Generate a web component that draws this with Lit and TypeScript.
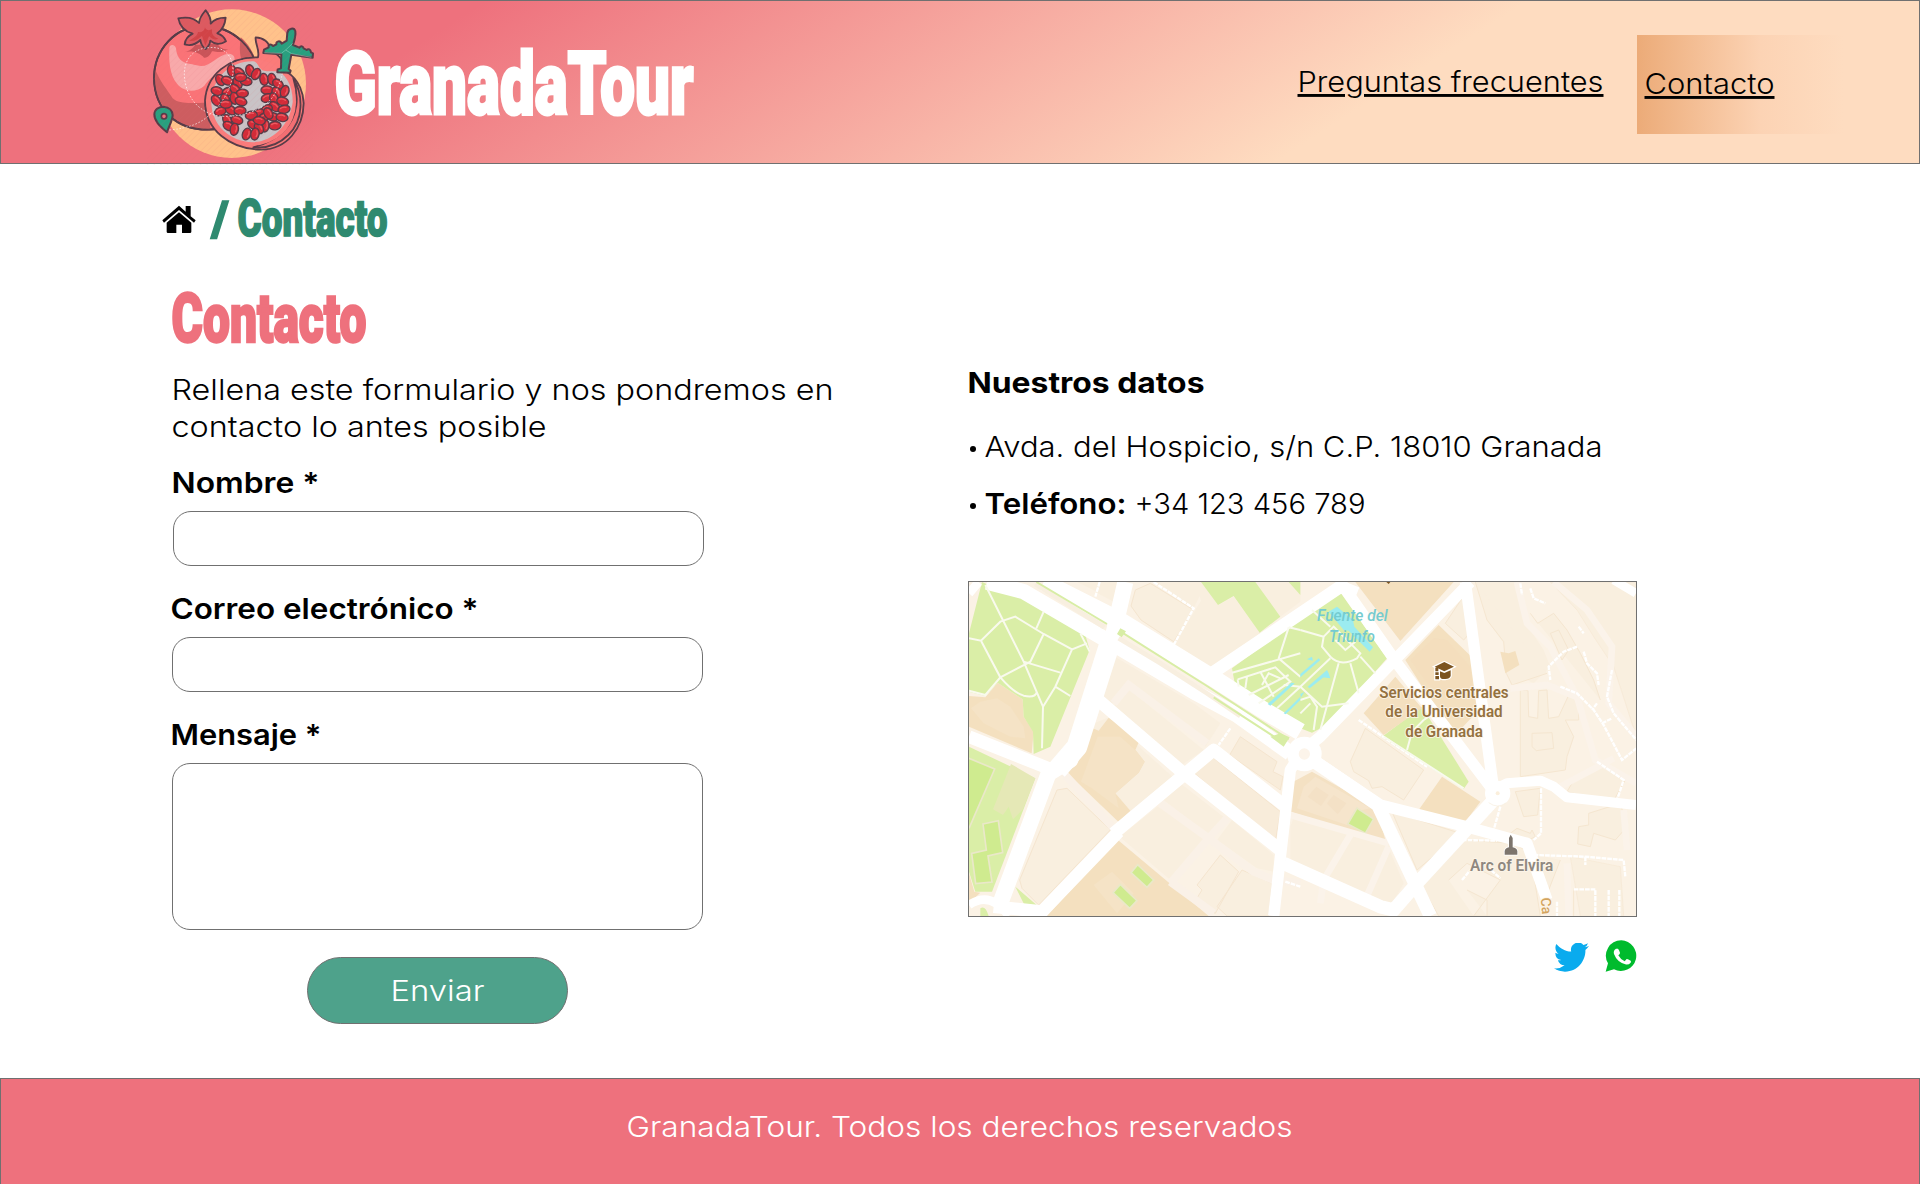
import { LitElement, html, svg, css } from "lit";
import { customElement } from "lit/decorators.js";

/** One line of text set to an exact measure: w = line width, b = baseline in a box of height h. */
const line = (
  content: string,
  w: number,
  size: number,
  cls: string,
  h = 36,
  b = 27
) => html`<svg class="line" width=${w} height=${h}>
  <text class=${cls} x="-1.5" y=${b} font-size=${size} textLength=${w + 2} lengthAdjust="spacingAndGlyphs">${content}</text>
</svg>`;

const seeds: [number, number, number][] = [
  [275, 212, 80], [298, 218, 40], [330, 212, 75], [348, 222, 120], [241, 240, 60], [262, 242, 20],
  [293, 248, 65], [318, 244, 10], [302, 232, 0], [231, 273, 15], [264, 275, -20], [285, 268, 45], [307, 280, 0],
  [229, 302, 50], [256, 298, 60], [283, 295, 80], [303, 304, 20], [241, 334, -20], [272, 330, 35], [300, 332, 0],
  [258, 312, 0], [262, 360, 60], [291, 360, 20], [266, 378, 30], [283, 388, 100], [372, 238, 80], [396, 238, 80],
  [414, 252, 40], [381, 270, 0], [410, 278, 60], [434, 274, 110], [381, 294, -20], [402, 296, 70], [428, 304, 15],
  [404, 320, 40], [432, 328, -10], [380, 328, -30], [356, 340, -20], [334, 346, -10], [370, 354, -40],
  [398, 350, 10], [426, 352, 10], [340, 374, 30], [375, 378, 100], [405, 377, -5], [357, 384, 60],
  [320, 402, 110], [345, 402, 100], [358, 362, 10], [385, 340, 60],
];

const logo = html`<svg class="logo" width="190" height="164" viewBox="0 3 570 492">
  <defs>
    <pattern id="hatch" width="14" height="14" patternUnits="userSpaceOnUse" patternTransform="rotate(45)">
      <path d="M0 0V14" stroke="#d9606c" stroke-width="3" opacity=".16" />
    </pattern>
  </defs>
  <circle cx="275" cy="251" r="223" fill="#ffc28b" />
  <g stroke="#573c48" stroke-width="5.5" stroke-linejoin="round" stroke-linecap="round">
    <path d="M195 78C105 76 42 150 42 235C44 330 110 390 205 389C300 385 352 315 354 230C350 145 280 80 195 78Z" fill="#fa7377" />
    <path d="M44 205C60 245 82 270 98 295C118 315 165 308 200 308L212 389C120 390 55 335 44 250Z" fill="#cd5d60" stroke="none" />
    <path d="M302 112C345 148 358 205 352 240L310 190C296 165 299 140 302 112Z" fill="#cd5d60" stroke="none" />
    <path d="M132 157C150 152 160 145 165 135L232 130C237 142 250 150 264 148C240 165 222 150 215 155C210 168 200 173 192 173C180 158 155 150 132 157Z" fill="#c95459" stroke="none" />
    <path d="M88 145C88 133 104 131 108 145C112 195 150 190 170 196C210 208 225 165 267 161C295 164 285 195 260 205C230 218 208 235 193 257C170 278 130 278 110 250C90 225 86 185 88 145Z" fill="#f8a9aa" stroke="none" />
    <path d="M195 78C105 76 42 150 42 235C44 330 110 390 205 389C300 385 352 315 354 230C350 145 280 80 195 78Z" fill="none" />
    <path d="M177 69C179 50 188 42 197 31C207 43 214 53 212 71C224 56 238 53 257 53C255 76 247 90 232 100C245 104 254 113 258 124C240 136 222 132 211 122C210 132 205 140 197 147C187 140 182 131 181 120C166 135 150 138 134 133C136 116 144 108 158 101C134 94 119 78 115 55C140 50 164 55 177 69Z" fill="#dc5a60" />
    <path d="M195 82C199 94 210 91 216 88C214 105 223 112 235 116C220 123 212 112 207 109L196 137L186 108C178 112 171 125 147 123C158 115 173 108 174 96C187 98 193 92 195 82Z" fill="#d14347" stroke="none" />
    <path d="M354 172C360 148 344 130 347 112C370 113 389 127 388 145C408 160 436 180 440 215C480 240 491 285 491 310C490 385 440 448 365 449C270 448 195 390 195 302C200 225 265 170 354 172Z" fill="#fb7b79" />
    <path d="M460 235C490 285 492 360 445 405C420 430 385 446 340 442C415 420 460 380 469 315C473 280 468 260 460 235Z" fill="#f46e72" />
    <ellipse cx="336" cy="307" rx="132" ry="130" fill="#fa7c7c" stroke="none" />
    <path d="M336 184C355 184 350 198 367 211C388 219 404 207 424 220C450 240 459 278 458 307C450 375 397 426 339 427C268 425 215 375 214 307C215 235 270 185 336 184Z" fill="#c9c3c6" stroke="none" />
  </g>
  <g fill="#d32b38" stroke="#573c48" stroke-width="4">
    ${seeds.map(
      ([x, y, r]) => svg`<g transform="translate(${x} ${y}) rotate(${r})">
        <ellipse rx="18" ry="12.5" />
        <path d="M-10 -4Q-2 -9 7 -5" fill="none" stroke="#ee5a60" stroke-width="4" stroke-linecap="round" />
      </g>`
    )}
  </g>
  <path d="M88 390C145 385 184 370 211 342C244 314 278 265 279 210C278 160 245 139 207 143C158 145 132 180 133 225C136 290 177 342 245 349C320 351 380 325 405 280C416 258 424 238 427 220" fill="none" stroke="#fff" stroke-width="2.5" stroke-dasharray="5 5" opacity=".8" />
  <g fill="#27a07f" stroke="#573c48" stroke-width="6" stroke-linejoin="round">
    <path d="M81 397C58 377 43 363 43 343C44 327 57 320 71 320C87 321 98 332 98 346C97 362 87 378 81 397Z" />
    <circle cx="72" cy="349" r="8" fill="#ee717d" stroke-width="5" />
    <path d="M440 122L442 98C445 86 462 80 466 94C468 108 463 121 459 135L478 143C481 138 488 136 491 145L500 150C505 145 512 148 513 157L519 160L518 173L454 164L446 207L452 212L450 218L412 217L413 208L423 205L424 163L370 159L372 149L386 142C384 134 392 130 399 138L409 133C407 123 421 120 425 131Z" />
    <path d="M373 158L424 160L437 150L455 161L514 172M437 150L458 130" fill="none" stroke="#9dd6c4" stroke-width="1.5" />
  </g>
  <rect x="20" y="3" width="500" height="492" fill="url(#hatch)" />
</svg>`;

const mapArt = html`<svg class="art" width="667" height="334" viewBox="26 36 2001 1002" preserveAspectRatio="none">
  <rect x="26" y="36" width="2001" height="1002" fill="#fbf2e5" />
  <g fill="#f9efdf" stroke="#f5e5cf" stroke-width="3">
    <path d="M350 36L410 65L418 36M420 36L412 70L460 95L475 36ZM520 36H580L700 115L718 78L722 92L640 225L745 295L900 190L820 80L775 105L722 36H880L960 140L1020 95V36" stroke="none" />
    <path d="M525 60L512 108L542 150L640 215L700 120L570 40Z" />
    <path d="M466 262L420 370L455 400L505 335L735 530L780 460L700 400Z" stroke="none" />
    <path d="M505 358L463 408L668 582L730 540Z" stroke="none" />
    <path d="M440 444L382 468L312 600L475 756L510 722L636 620Z" stroke="none" />
    <path d="M290 660L178 930L185 955L235 1005L450 780L320 655Z" />
    <path d="M620 745L528 835L628 915L708 820Z" />
    <path d="M598 705L478 800L630 930L740 815ZM660 640L610 690L745 795L795 745ZM815 750L770 810L890 895L940 905V855Z" stroke="none" />
    <path d="M757 562L700 608L945 815L960 725ZM840 500L808 555L960 660L968 620L938 605L950 575Z" fill="#f8ecda" />
    <path d="M780 855L710 945L725 960L700 1000L765 1030L835 905ZM845 900L770 1010L800 1038H925L935 940Z" />
    <path d="M990 770V870L1040 890L1290 1010L1330 940L1240 730L1020 690Z" stroke="none" />
  </g>
  <g fill="#f4e0bf">
    <path d="M382 468L415 482L445 443L540 506L525 540L553 575L535 608L465 670L510 722L475 756L312 600L342 558Z" />
    <path d="M26 378L75 382L112 338L187 388L190 440L220 485L214 550L26 470Z" />
    <path d="M470 808L260 1038H745Z" />
    <path d="M26 910L42 965L60 968L26 1000ZM1005 650L1020 640V730L990 722Z" />
  </g>
  <path d="M412 500L362 635L395 655L475 715L465 670L535 608L553 575L530 545L480 500Z M60 395L110 385L150 410L190 470L195 505L150 500L110 480L70 460L32 415Z M455 905L520 970L470 1030L400 945Z" fill="#f5e3c6" />
  <g fill="#daeea7">
    <path d="M65 36L140 70L190 85L375 195L388 240L270 530L220 552L218 485L190 440L187 388L112 338L75 378L26 365V190Z" />
    <path d="M26 530L225 625L95 965H45L26 905Z" />
    <path d="M722 36L773 105L820 78L898 188L960 140L885 36ZM985 36L1020 75V36ZM815 295L1020 145L1135 60L1280 265L1110 460L1055 488L1020 475L825 350Z" />
    <path d="M1265 500L1385 410L1525 635L1510 657Z" />
    <path d="M212 820L172 915L176 890ZM165 950L235 1010L195 1010ZM60 1015Q75 1005 85 1038H60Z" />
  </g>
  <path d="M152 582L225 625L188 718L158 748L145 710L128 735L98 718Z" fill="#e5e8b6" />
  <g fill="#cfeb8f" stroke="#eae8c9" stroke-width="5">
    <path d="M26 565L103 597L26 775" /><path d="M68 762L114 752L127 848L83 858L95 936L46 941L34 850L78 840Z" />
    <path d="M532 884L580 930L560 952L512 908ZM480 943L530 992L508 1015L458 968Z" />
  </g>
  <g fill="none" stroke="#faf1e7" stroke-width="24">
    <path d="M460 400L505 345L740 520M310 610L460 775M600 700L745 805L880 905L940 930L1020 940M630 940L745 805L800 745M630 935L760 1030" />
  </g>
  <g transform="translate(1020 0)">
    <path d="M165 36H460L300 213ZM315 270L415 165L518 265L530 350L535 420L460 500ZM190 430L285 320L365 415L250 495ZM355 720L425 620L540 695L495 755Z" fill="#f4e0bf" />
    <path d="M-30 640L35 605L230 715L255 810L180 790L-30 725Z" fill="#f4e1c3" />
    <path d="M10 650L45 620L210 715L160 725L140 765L-10 715Z" fill="#f6e5cc" />
    <path d="M22 680L48 650L85 675L62 708ZM80 700L100 675L138 700L112 733Z" fill="#f4e1c6" />
    <path d="M330 270L400 205L440 210L510 290L520 380L470 390L430 375L380 340Z" fill="#f3dcbb" opacity=".5" />
    <path d="M170 714L220 747L195 790L142 762Z" fill="#cfeb8f" stroke="#eae8c9" stroke-width="5" />
    <g fill="#f9efdf" stroke="#f5e6d0" stroke-width="3">
      <path d="M485 85L500 120L508 190L490 210L435 160Z" />
      <path d="M195 475L370 600L310 690L245 650L215 655L205 632L160 605L150 575Z" />
      <path d="M525 36L560 150L610 220L640 310L700 340L750 290L730 240L670 150L650 36Z" stroke="none" />
      <path d="M525 36L560 150L610 215L618 310L635 345L740 310M690 130L712 160L760 130L800 180L840 250L880 330L900 390M660 360V620L795 600L800 560L820 500L795 450H835V380L810 365L775 440L745 445L740 360L715 362L712 445L685 440L683 362Z" />
      <path d="M695 490L755 488L760 535L708 542L695 530ZM645 665L720 655L712 735L670 740ZM960 700L980 770L945 810L880 790L870 830L832 822L835 770L865 765L865 730ZM905 580L975 630L935 700L800 665L815 640ZM750 190L775 180L805 240L785 270Z" />
      <path d="M630 790L650 775L690 790L695 780L705 800L665 820L620 800ZM445 930L500 880L600 930L520 1038M500 960L560 990L560 1038M490 810L360 940L415 1038H720L690 850L640 820ZM690 850L745 960L780 870M820 955V1038M275 725L350 900L480 790Z" />
      <path d="M750 36L830 120L880 200L940 290L1008 500V36ZM810 860L960 890L970 1038H840Z" stroke-opacity=".5" />
    </g>
    <path d="M600 245L625 250L645 243L657 285L615 310Z" fill="#f4e0bf" />
    <g fill="none" stroke="#fbf3ea" stroke-width="20">
      <path d="M650 36L680 160L750 230L830 380L885 570L1008 640M760 36L860 120L935 230L925 400L1008 500M630 355L740 345L840 385M-30 735L265 820M150 795L70 930L60 1000M265 830L190 1000M800 880L805 1038M970 720L980 840M780 650L940 565" />
    </g>
  </g>
  <g fill="none" stroke="#fff" stroke-linejoin="round">
    <path d="M495 36L455 210L330 570L265 610L120 1000" stroke-width="48" />
    <path d="M455 200L350 530L290 600" stroke-width="62" />
    <path d="M80 36L190 65L430 205L700 365L830 435L990 550" stroke-width="46" />
    <path d="M250 36L475 150L760 325L900 415L1020 485" stroke-width="52" />
    <path d="M26 500L265 595M408 385L670 610L960 840M475 785L245 1025L100 1010M460 790L760 540L970 705M755 310L1140 50L1190 70" stroke-width="38" />
    <path d="M1140 36L1310 280L1590 650M1515 36L1600 660M1530 36L1080 500L1025 545L990 600L940 1038" stroke-width="34" />
    <path d="M1000 555L1060 570L1260 705L1510 768L1700 820L1760 990" stroke-width="34" />
    <path d="M1055 570L1260 710M1250 700L1410 1038M970 880L1260 1010L1300 1020L1370 940L1600 690" stroke-width="40" />
    <path d="M1600 660L1640 640L1740 632L1780 650L1820 682L2027 705" stroke-width="30" />
    <path d="M26 1005Q90 960 145 1038" stroke-width="25" />
    <path d="M26 70L55 36M1960 30L2027 70" stroke-width="26" />
  </g>
  <path d="M225 42L432 172M475 205L600 280L740 370L840 438" stroke="#f8efe0" stroke-width="14" fill="none" />
  <path d="M228 36L440 162M480 184L740 348L985 508M760 382L960 512" stroke="#d8eda5" stroke-width="6" fill="none" />
  <path d="M480 175L497 184L484 202L470 192ZM960 490L988 502L970 530L930 500Z" fill="#d8eda5" />
  <circle cx="1032" cy="552" r="52" fill="#fff" /><circle cx="1032" cy="552" r="17" fill="#fcf4ea" />
  <circle cx="1612" cy="670" r="38" fill="#fff" /><circle cx="1612" cy="670" r="6" fill="#fbefdc" />
  <path d="M1585 698Q1612 718 1638 698" fill="none" stroke="#f6eddd" stroke-width="2" />
  <g fill="none" stroke="#f9faee" stroke-width="6">
    <path d="M75 45L190 275L248 410L245 535M26 205L62 212L120 155L165 140L250 192L335 238L380 220M250 125L228 175M250 192L210 275L120 322L75 375L26 362M62 212L120 322Q160 368 190 377Q225 385 230 365M190 275L300 308M335 238L285 350L248 410M285 350L330 378M360 190L388 245" />
    <path d="M815 308L1020 250M985 172L955 265L1020 320M985 172L1020 180M832 328L945 292L990 335L895 400M832 328L835 350M860 320L855 355M865 375L985 315M900 305L940 380M950 415L1020 350M905 345L925 310L960 325" />
  </g>
  <g fill="none" stroke="#fff" stroke-width="7" stroke-dasharray="14 3">
    <path d="M580 36L700 115L640 225M418 36L405 80M810 475L775 525M975 935L1020 950" />
    <g transform="translate(1020 0)">
      <path d="M660 40L665 75M690 55L700 85L735 100M835 170L850 190M830 230L790 245L745 290L750 330M850 245L860 280L890 310L895 345M780 350L830 370L880 420L910 465L965 570L1008 535M935 300L920 380L940 430L1008 510M905 460L935 445M890 400L875 420M890 575L970 630L950 690M722 655V790L700 810M485 810L590 812M700 855L855 860L970 870L975 920M855 860V885M820 958H885V1038M925 960V1038M957 960V1038M770 995V1038M600 710L580 780M485 930L510 900M560 890L600 925M175 450L380 590" />
    </g>
  </g>
  <g transform="translate(1020 0)" fill="none" stroke="#f9faee" stroke-width="6">
    <path d="M0 180L70 200L65 230L90 260Q120 292 170 265L180 250L135 205L100 170L70 200M35 120L90 170M150 280L175 370M180 260L225 310M165 215L135 240L105 210M90 265L0 350M115 280L60 480M-50 345L0 350L65 410L145 400M0 390L30 380L50 410L40 480M30 400L0 430M250 500L490 655M370 450L335 485L320 540M370 450L385 440" />
  </g>
  <g fill="#9becf0">
    <path d="M1105 125L1130 110L1178 150L1182 170L1238 232L1228 245L1165 182L1150 180Z" />
    <path d="M922 402L993 338L1003 340L930 407ZM970 430L1020 380V390L976 433ZM1020 312L1075 265L1080 270L1020 322ZM1042 350L1100 300L1105 310L1048 355ZM1020 372L1032 366L1022 382ZM1085 322L1105 310L1110 325ZM1040 268L1055 260L1058 272Z" />
  </g>
  <path d="M1278 36H1290L1285 42Z" fill="#7c5420" />
  <g fill="#7c5420">
    <path d="M1423 290L1452 276L1481 290L1452 304ZM1439 304L1452 309L1471 301V318Q1468 327 1455 327H1447Q1439 326 1439 318ZM1425 293H1434V304H1425ZM1425 307H1435V315H1425ZM1425 318H1436V328H1425Z" stroke="#fff" stroke-width="7" paint-order="stroke" />
  </g>
  <path d="M1633 854V843Q1635 834 1646 832V804L1651 794L1657 804V832Q1669 834 1671 843V854Z" fill="#7d756d" stroke="#fff" stroke-width="5" paint-order="stroke" />
  <g class="places">
    <g class="water">
      <text x="1070" y="153" textLength="212" lengthAdjust="spacingAndGlyphs">Fuente del</text>
      <text x="1106" y="215" textLength="138" lengthAdjust="spacingAndGlyphs">Triunfo</text>
    </g>
    <g class="civic">
      <text x="1257" y="384" textLength="388" lengthAdjust="spacingAndGlyphs">Servicios centrales</text>
      <text x="1275" y="442" textLength="352" lengthAdjust="spacingAndGlyphs">de la Universidad</text>
      <text x="1335" y="500" textLength="233" lengthAdjust="spacingAndGlyphs">de Granada</text>
    </g>
    <text class="sight" x="1529" y="904" textLength="250" lengthAdjust="spacingAndGlyphs">Arc of Elvira</text>
    <text class="street" transform="translate(1741 984) rotate(85)">Ca</text>
  </g>
</svg>`;

const house = html`<svg width="34" height="29" viewBox="0 0 102 87">
  <path d="M51 2L71 20V3H86V34L101 46L96 53L51 15L6 53L1 46Z" />
  <path d="M51 22L88 53V80Q88 84 84 84H60V59H43V84H18Q14 84 14 80V53Z" />
</svg>`;

const bird = html`<svg width="35" height="29" viewBox="0 2.5 24 19.5" preserveAspectRatio="none">
  <path fill="#0aabee" d="M23.95 4.57a10 10 0 0 1-2.82.77 4.96 4.96 0 0 0 2.16-2.72c-.95.55-2 .95-3.13 1.18a4.92 4.92 0 0 0-8.38 4.48C7.69 8.1 4.07 6.13 1.64 3.16a4.82 4.82 0 0 0-.67 2.48c0 1.71.87 3.21 2.19 4.1a4.9 4.9 0 0 1-2.23-.62v.06a4.92 4.92 0 0 0 3.95 4.83 5 5 0 0 1-2.21.08 4.94 4.94 0 0 0 4.6 3.42A9.87 9.87 0 0 1 0 19.54a14 14 0 0 0 7.55 2.21c9.05 0 14-7.5 14-13.98 0-.21 0-.42-.02-.63a9.94 9.94 0 0 0 2.46-2.55z" />
</svg>`;

const phone = html`<svg width="32" height="32" viewBox="0 0 96 96">
  <path fill="#00bb2d" d="M49 1A46 46 0 1 1 27 88L2 95L9 70A46 46 0 0 1 49 1Z" />
  <path fill="#fff" d="M33 26L39 26Q42 29 45 38Q46 41 40 46Q47 59 59 64L65 57Q68 56 77 62Q79 64 77 68Q70 76 61 73Q36 66 27 42Q24 32 33 26Z" />
</svg>`;

@customElement("app-root")
export class AppRoot extends LitElement {
  static styles = css`
    :host {
      display: flex;
      flex-direction: column;
      width: 1920px;
      height: 1184px;
      overflow: hidden;
      background: #fff;
      font-family: Inter, "Liberation Sans", sans-serif;
    }
    * { box-sizing: border-box; }
    svg { display: block; flex: none; }
    .line { overflow: visible; }
    h1, h2, p, ul { margin: 0; padding: 0; font-size: inherit; font-weight: inherit; }
    ul { list-style: none; }
    a { display: block; color: inherit; text-decoration: none; }
    .thin { font-weight: 300; }
    .semi { font-weight: 600; }
    .bold { font-weight: 700; }
    .white { fill: #fff; }
    .under { text-decoration: underline; text-decoration-thickness: 1px; text-underline-offset: 2px; }
    .display { font-family: Roboto, "Liberation Sans", sans-serif; font-weight: 900; }
    .brand { fill: #fff; stroke: #fff; stroke-width: 3px; }
    .crumb { fill: #2f8a70; stroke: #2f8a70; stroke-width: 1.6px; }
    .title { fill: #ee717d; stroke: #ee717d; stroke-width: 2.4px; }
    header {
      display: flex;
      height: 164px;
      padding-left: 139px;
      border: 1px solid #707070;
      background: linear-gradient(147.5deg, #ee717d 22.3%, #fedcc0 70.3%);
    }
    .name { margin: 39px 0 0 6px; }
    nav { display: flex; margin-left: auto; padding-right: 76px; }
    .faq { margin: 63px 34px 0 0; }
    .current {
      width: 206px;
      height: 99px;
      margin-top: 34px;
      padding: 31px 0 0 9px;
      background: linear-gradient(90deg, #ecab78, #fcd3b4 60%, #fedcc000);
    }
    main { flex: 1; padding: 33px 0 0 162px; }
    .crumbs { display: flex; height: 44px; }
    .crumbs a { padding: 8px 17px 0 0; }
    .here { margin-left: 11px; }
    .columns { display: grid; grid-template-columns: 796px 669px; padding-left: 10px; }
    .left { padding: 49px 0 0 1px; }
    .intro { margin: 23px 0 19px; }
    form { display: flex; flex-direction: column; gap: 26px; width: 531px; }
    .field { display: flex; flex-direction: column; gap: 9px; }
    .field + .field { margin-left: -1px; }
    input, textarea {
      display: block;
      width: 531px;
      height: 55px;
      padding: 8px 18px;
      border: 1px solid #707070;
      border-radius: 18px;
      background: #fff;
      font: 300 28px Inter, sans-serif;
      resize: none;
      outline: none;
    }
    textarea { height: 167px; }
    .send {
      display: flex;
      align-self: center;
      justify-content: center;
      width: 261px;
      height: 67px;
      margin: 1px 0 0 -2px;
      padding: 16px 0 0;
      border: 1px solid #707070;
      border-radius: 34px;
      background: #4ea28b;
      font-family: inherit;
    }
    .right { padding-top: 125px; }
    .right h2 { padding-left: 1px; }
    .data { display: flex; flex-direction: column; gap: 21px; padding: 28px 0 58px 1px; }
    .data li { display: flex; }
    .data li::before {
      content: "";
      width: 6px;
      height: 6px;
      margin: 16px 10px 0 1px;
      border-radius: 50%;
      background: #000;
    }
    .gap { margin-left: 10px; }
    .map { height: 336px; border: 1px solid #707070; overflow: hidden; }
    .places { font-family: Roboto, sans-serif; font-weight: 600; font-size: 47px; stroke: #fdf6ea; stroke-width: 5px; paint-order: stroke; }
    .water { fill: #74cbd0; font-style: italic; stroke: none; font-weight: 500; }
    .civic { fill: #94713f; }
    .sight { fill: #8f8880; }
    .street { fill: #d3a45e; font-size: 42px; font-weight: 500; }
    .social { display: flex; justify-content: flex-end; gap: 16px; padding-top: 23px; }
    .social a:first-child { padding-top: 3px; }
    footer {
      display: flex;
      justify-content: center;
      height: 106px;
      padding-top: 31px;
      border: 1px solid #707070;
      border-bottom: 0;
      background: #ee717d;
    }
  `;

  private fields = [
    { label: "Nombre *", width: 146, area: false },
    { label: "Correo electrónico *", width: 306, area: false },
    { label: "Mensaje *", width: 149, area: true },
  ];

  render() {
    return html`
      <header>
        ${logo}
        <div class="name">${line("GranadaTour", 357, 87, "display brand", 90, 74)}</div>
        <nav>
          <a class="faq" href="#">${line("Preguntas frecuentes", 304, 29, "thin under", 30, 28)}</a>
          <div class="current"><a href="#">${line("Contacto", 128, 29, "thin under", 30, 28)}</a></div>
        </nav>
      </header>
      <main>
        <div class="crumbs">
          <a href="#">${house}</a>
          ${line("/", 15, 48, "display crumb", 44, 38)}
          <div class="here">${line("Contacto", 148, 52, "display crumb", 44, 39)}</div>
        </div>
        <div class="columns">
          <section class="left">
            <h1>${line("Contacto", 193, 68, "display title", 60, 52)}</h1>
            <p class="intro">
              ${line("Rellena este formulario y nos pondremos en", 660, 29, "thin", 37, 27)}
              ${line("contacto lo antes posible", 373, 29, "thin", 37, 27)}
            </p>
            <form>
              ${this.fields.map(
                (f) => html`<label class="field">
                  ${line(f.label, f.width, 29, "semi")}
                  ${f.area ? html`<textarea></textarea>` : html`<input type="text" />`}
                </label>`
              )}
              <button class="send" type="button">${line("Enviar", 92, 29, "thin white")}</button>
            </form>
          </section>
          <section class="right">
            <h2>${line("Nuestros datos", 235, 29, "bold")}</h2>
            <ul class="data">
              <li>${line("Avda. del Hospicio, s/n C.P. 18010 Granada", 616, 29, "thin")}</li>
              <li>
                ${line("Teléfono:", 140, 29, "semi")}
                <span class="gap">${line("+34 123 456 789", 229, 29, "thin")}</span>
              </li>
            </ul>
            <div class="map">${mapArt}</div>
            <div class="social"><a href="#">${bird}</a><a href="#">${phone}</a></div>
          </section>
        </div>
      </main>
      <footer>${line("GranadaTour. Todos los derechos reservados", 664, 29, "thin white")}</footer>
    `;
  }
}
